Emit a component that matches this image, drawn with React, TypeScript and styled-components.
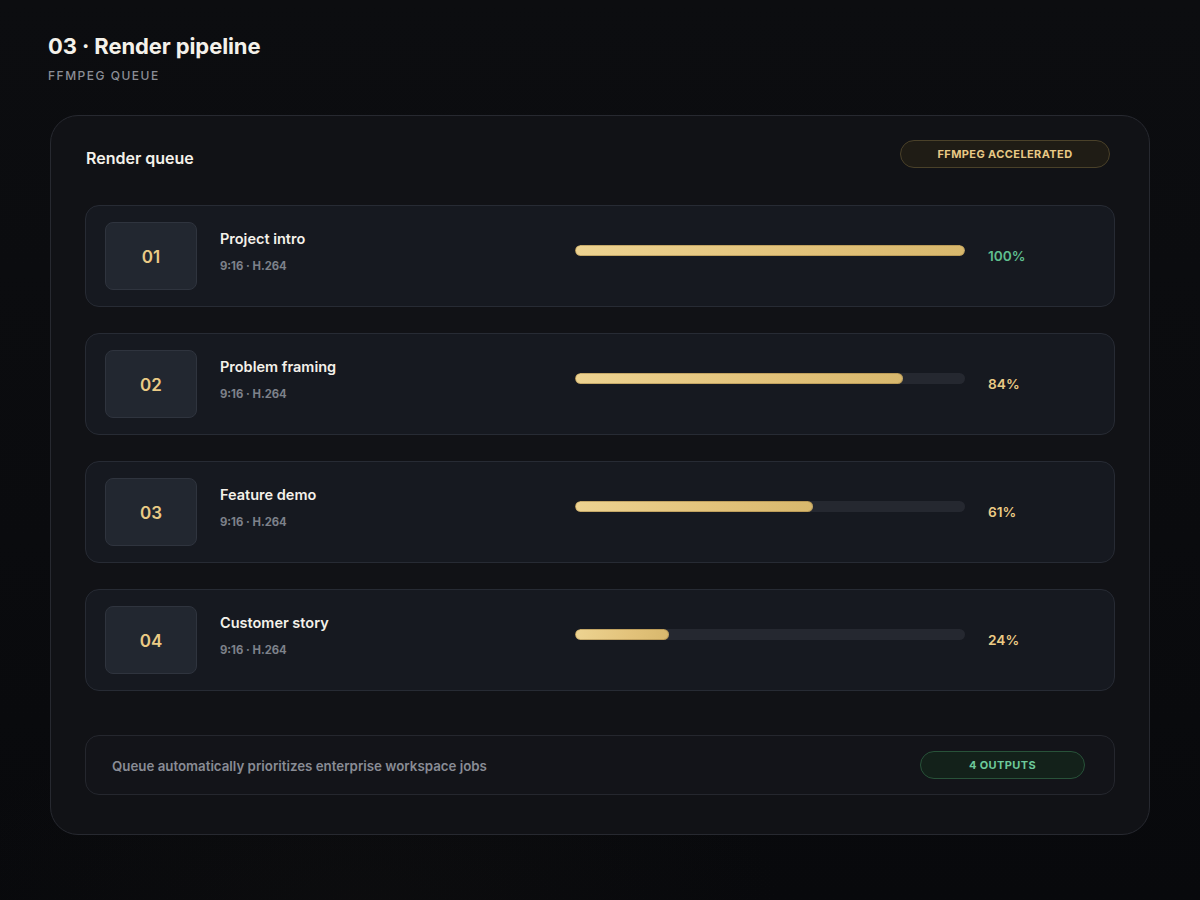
import React from "react";
import styled, { createGlobalStyle } from "styled-components";

const GlobalStyle = createGlobalStyle`
  html, body {
    margin: 0;
    padding: 0;
    background: #0a0b0e;
  }
  body {
    font-family: Inter, "Noto Sans", "Liberation Sans", sans-serif;
    -webkit-font-smoothing: antialiased;
  }
`;

const Page = styled.div`
  min-height: 900px;
  box-sizing: border-box;
  padding: 32px 50px 0 48px;
  background:
    radial-gradient(ellipse 600px 300px at 30% 100%, rgba(30, 28, 24, 0.18), transparent 70%),
    linear-gradient(180deg, #0c0d10 0%, #0a0b0e 60%, #08090c 100%);
`;

const Title = styled.h1`
  margin: 0;
  font-size: 22px;
  line-height: 28px;
  font-weight: 700;
  color: #f4f1ea;
  letter-spacing: -0.1px;
`;

const Eyebrow = styled.div`
  margin-top: 8px;
  font-size: 12px;
  line-height: 16px;
  font-weight: 500;
  letter-spacing: 1.5px;
  color: #8b8e96;
`;

const Card = styled.section`
  margin: 31px 0 0 2px;
  width: 1100px;
  box-sizing: border-box;
  border: 1px solid #272930;
  border-radius: 28px;
  background: #111216;
  padding: 24px 34px 39px 34px;
`;

const CardHeader = styled.div`
  display: flex;
  align-items: flex-end;
  justify-content: space-between;
  padding: 0 5px 0 1px;
`;

const CardTitle = styled.h2`
  margin: 0;
  font-size: 16px;
  line-height: 20px;
  font-weight: 600;
  color: #f4f1ea;
`;

const Pill = styled.span<{ $tone: "gold" | "green"; $width: number }>`
  display: inline-flex;
  align-items: center;
  justify-content: center;
  box-sizing: border-box;
  width: ${(p) => p.$width}px;
  height: 28px;
  border-radius: 14px;
  font-size: 11px;
  font-weight: 700;
  letter-spacing: 0.4px;
  color: ${(p) => (p.$tone === "gold" ? "#e8c985" : "#6dc99b")};
  background: ${(p) => (p.$tone === "gold" ? "#1f1c15" : "#13211a")};
  border: 1px solid ${(p) => (p.$tone === "gold" ? "#4a4129" : "#285239")};
`;

const Queue = styled.div`
  margin-top: 37px;
  display: flex;
  flex-direction: column;
  gap: 26px;
`;

const Row = styled.div`
  display: grid;
  grid-template-columns: 92px 332px 390px 105px;
  column-gap: 23px;
  align-items: center;
  height: 102px;
  box-sizing: border-box;
  padding: 0 20px 0 19px;
  border: 1px solid #272b34;
  border-radius: 14px;
  background: #161920;
`;

const IndexBox = styled.div`
  height: 68px;
  box-sizing: border-box;
  display: flex;
  align-items: center;
  justify-content: center;
  padding-top: 2px;
  border: 1px solid #2f343e;
  border-radius: 8px;
  background: #222730;
  font-size: 17px;
  font-weight: 600;
  color: #ebcb85;
`;

const Info = styled.div`
  display: flex;
  flex-direction: column;
  gap: 11px;
  margin-top: -10px;
`;

const JobName = styled.div`
  font-size: 14.5px;
  line-height: 18px;
  font-weight: 600;
  color: #f4f1ea;
`;

const JobMeta = styled.div`
  font-size: 11.3px;
  line-height: 14px;
  font-weight: 700;
  color: #7d818a;
`;

const Track = styled.div`
  height: 11px;
  margin-bottom: 11px;
  border-radius: 6px;
  background: #252830;
  overflow: hidden;
`;

const Fill = styled.div`
  height: 100%;
  box-sizing: border-box;
  border-radius: 6px;
  border: 1px solid rgba(150, 120, 60, 0.45);
  background: linear-gradient(100deg, #edd391 0%, #e2c27a 60%, #d8b86d 100%);
`;

const Percent = styled.div<{ $done: boolean }>`
  font-size: 13.7px;
  font-weight: 600;
  margin-bottom: 1px;
  color: ${(p) => (p.$done ? "#5fbf8e" : "#ebcb85")};
`;

const Footer = styled.div`
  margin-top: 44px;
  height: 60px;
  box-sizing: border-box;
  display: flex;
  align-items: center;
  justify-content: space-between;
  padding: 0 29px 0 26px;
  border: 1px solid #25272e;
  border-radius: 14px;
  background: #131419;
`;

const FooterText = styled.div`
  font-size: 13.3px;
  font-weight: 600;
  color: #898c95;
  padding-top: 1px;
`;

type Job = { id: string; name: string; meta: string; progress: number };

const jobs: Job[] = [
  { id: "01", name: "Project intro", meta: "9:16 · H.264", progress: 100 },
  { id: "02", name: "Problem framing", meta: "9:16 · H.264", progress: 84 },
  { id: "03", name: "Feature demo", meta: "9:16 · H.264", progress: 61 },
  { id: "04", name: "Customer story", meta: "9:16 · H.264", progress: 24 },
];

export default function App() {
  return (
    <>
      <GlobalStyle />
      <Page>
        <Title>03 · Render pipeline</Title>
        <Eyebrow>FFMPEG QUEUE</Eyebrow>
        <Card>
          <CardHeader>
            <CardTitle>Render queue</CardTitle>
            <Pill $tone="gold" $width={210}>
              FFMPEG ACCELERATED
            </Pill>
          </CardHeader>
          <Queue>
            {jobs.map((job) => (
              <Row key={job.id}>
                <IndexBox>{job.id}</IndexBox>
                <Info>
                  <JobName>{job.name}</JobName>
                  <JobMeta>{job.meta}</JobMeta>
                </Info>
                <Track>
                  <Fill style={{ width: `${job.progress}%` }} />
                </Track>
                <Percent $done={job.progress === 100}>{job.progress}%</Percent>
              </Row>
            ))}
          </Queue>
          <Footer>
            <FooterText>Queue automatically prioritizes enterprise workspace jobs</FooterText>
            <Pill $tone="green" $width={165}>
              4 OUTPUTS
            </Pill>
          </Footer>
        </Card>
      </Page>
    </>
  );
}
